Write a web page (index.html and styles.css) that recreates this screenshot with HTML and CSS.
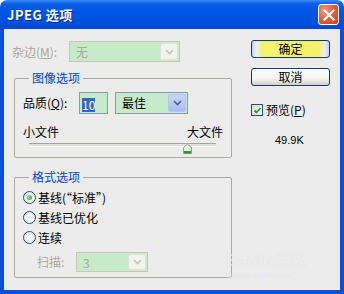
FILE: index.html
```html
<!DOCTYPE html>
<html lang="zh">
<head>
    <meta charset="UTF-8">
    <title>JPEG 选项</title>
<link rel="stylesheet" href="styles.css">
</head>
<body>
    <div class="window">
        <div class="titlebar">
            <span class="title">JPEG 选项</span>
            <span class="close">
                <svg width="12" height="12" viewBox="0 0 12 12"><path d="M1.5 1.5 L10.5 10.5 M10.5 1.5 L1.5 10.5" stroke="#fff" stroke-width="2.2" stroke-linecap="square"/></svg>
            </span>
        </div>

        <div class="client">
            <div class="left">
                <div class="row matte-row">
                    <span class="label matte-label disabled">杂边(<u>M</u>):</span>
                    <div class="select off matte-select">
                        <span class="value">无</span>
                        <span class="drop"><svg width="9" height="6" viewBox="0 0 9 6"><path d="M1 1 L4.5 4.5 L8 1" fill="none" stroke="#c4c3bb" stroke-width="1.6"/></svg></span>
                    </div>
                </div>

                <fieldset class="group image-group">
                    <legend>图像选项</legend>
                    <div class="row">
                        <span class="label quality-label">品质(<u>Q</u>):</span>
                        <div class="textbox"><span class="picked">10</span></div>
                        <div class="select on quality-select">
                            <span class="value">最佳</span>
                            <span class="drop"><svg width="9" height="6" viewBox="0 0 9 6"><path d="M1 1 L4.5 4.5 L8 1" fill="none" stroke="#4d6185" stroke-width="1.6"/></svg></span>
                        </div>
                    </div>
                    <div class="size-labels"><span>小文件</span><span>大文件</span></div>
                    <div class="slider">
                        <div class="track"></div>
                        <div class="thumb">
                            <svg width="9" height="10" viewBox="0 0 9 10"><path d="M0.5 9.5 V3.5 L4.5 0.5 L8.5 3.5 V9.5 Z" fill="#f4f4f0" stroke="#9d9c94"/><rect x="1" y="7" width="7" height="2.5" fill="#21a121"/></svg>
                        </div>
                    </div>
                </fieldset>

                <fieldset class="group format-group">
                    <legend>格式选项</legend>
                    <div class="radio checked"><span class="dot"></span>基线(“标准”)</div>
                    <div class="radio"><span class="dot"></span>基线已优化</div>
                    <div class="radio"><span class="dot"></span>连续</div>
                    <div class="row scan-row">
                        <span class="label scan-label disabled">扫描:</span>
                        <div class="select off scan-select">
                            <span class="value">3</span>
                            <span class="drop"><svg width="9" height="6" viewBox="0 0 9 6"><path d="M1 1 L4.5 4.5 L8 1" fill="none" stroke="#c4c3bb" stroke-width="1.6"/></svg></span>
                        </div>
                    </div>
                </fieldset>
            </div>

            <div class="right">
                <div class="btn default">确定</div>
                <div class="btn">取消</div>
                <div class="check">
                    <span class="box"><svg width="9" height="9" viewBox="0 0 9 9"><path d="M1.5 4.5 L3.5 6.5 L7.5 2" fill="none" stroke="#21a121" stroke-width="1.8"/></svg></span>
                    预览(<u>P</u>)
                </div>
                <div class="filesize">49.9K</div>
            </div>
        </div>

        <div class="watermark">
            <div class="wm-main">Bai<span class="paw">du</span>经验</div>
            <div class="wm-sub">jingyan.baidu.com</div>
        </div>
    </div>
</body>
</html>
```

FILE: styles.css
```css
:root {
    --face: #ececec;
    --frame-blue: #0a4fdc;
    --group-line: #a9a9a2;
    --group-text: #0046d5;
    --disabled-text: #aca899;
    --field-green: #c7ebc9;
    --field-border: #7f9db9;
}

body {
    margin: 0;
    padding: 0;
    background: #ffffff;
    font-family: "Noto Sans CJK SC", "Noto Sans", sans-serif;
    font-size: 12px;
    color: #000;
}

.window {
    position: relative;
    width: 344px;
    height: 294px;
    display: flex;
    flex-direction: column;
    overflow: hidden;
}

.titlebar {
    height: 29px;
    display: flex;
    align-items: center;
    justify-content: space-between;
    padding: 0 5px 0 7px;
    background: linear-gradient(#3b8cf8 0, #0a5de8 4px, #0055e5 40%, #0050dc 80%, #0347cf 100%);
    border-radius: 7px 7px 0 0;
    box-sizing: border-box;
}

.title {
    color: #fff;
    font-family: "Noto Sans CJK SC", sans-serif;
    font-weight: bold;
    font-size: 13px;
    letter-spacing: 0.5px;
    text-shadow: 1px 1px 0 #0a2a8a;
}

.close {
    width: 21px;
    height: 21px;
    box-sizing: border-box;
    border: 1px solid #fff;
    border-radius: 3px;
    background: radial-gradient(circle at 30% 30%, #f59a7c 0, #e3623c 45%, #c8401c 100%);
    display: flex;
    align-items: center;
    justify-content: center;
}

.client {
    flex-grow: 1;
    display: flex;
    background: var(--face);
    border: 4px solid var(--frame-blue);
    border-top: none;
    padding-left: 8px;
}

.left {
    width: 220px;
}

.row {
    display: flex;
    align-items: center;
}

.label {
    line-height: 14px;
}

.disabled {
    color: var(--disabled-text);
}

.matte-row {
    margin-top: 12px;
}

.matte-label {
    width: 57px;
}

/* dropdowns */
.select {
    height: 21px;
    box-sizing: border-box;
    display: flex;
    align-items: stretch;
    background: var(--field-green);
}

.select .value {
    flex-grow: 1;
    padding-left: 6px;
    line-height: 19px;
}

.select .drop {
    width: 16px;
    margin: 1px;
    display: flex;
    align-items: center;
    justify-content: center;
    border-radius: 2px;
}

.select.off {
    border: 1px solid #c9c7ba;
}

.select.off .value {
    color: var(--disabled-text);
}

.select.off .drop {
    background: #f2f2ee;
    border: 1px solid #e2e1da;
}

.select.on {
    border: 1px solid var(--field-border);
}

.select.on .drop {
    background: linear-gradient(#c6d3f7, #b6c8f6 60%, #a7bcf2);
    border: 1px solid #b4c6f0;
}

.matte-select {
    width: 111px;
}

.quality-select {
    width: 73px;
    height: 22px;
}

.scan-select {
    width: 72px;
    height: 20px;
}

/* group boxes */
.group {
    margin: 0 0 0 2px;
    width: 218px;
    box-sizing: border-box;
    border: 1px solid var(--group-line);
    border-radius: 2px;
    padding: 0 8px;
    min-inline-size: 0;
}

.group legend {
    color: var(--group-text);
    padding: 0 3px;
    margin-left: 6px;
    line-height: 14px;
}

.image-group {
    margin-top: 9px;
    padding-top: 7px;
    padding-bottom: 7px;
}

.quality-label {
    width: 56px;
}

.textbox {
    width: 29px;
    height: 22px;
    box-sizing: border-box;
    border: 1px solid var(--field-border);
    background: var(--field-green);
    margin-right: 7px;
    padding: 3px 0 0 2px;
}

.picked {
    background: #316ac5;
    color: #fff;
    line-height: 14px;
    display: inline-block;
}

.size-labels {
    display: flex;
    justify-content: space-between;
    margin-top: 11px;
    line-height: 14px;
}

.slider {
    position: relative;
    height: 10px;
    margin: 1px 7px 0 6px;
}

.track {
    position: absolute;
    left: 0;
    right: 0;
    top: 3px;
    height: 2px;
    border-top: 1px solid #a4a39c;
    border-bottom: 1px solid #fff;
    background: #e1e0da;
    border-radius: 1px;
}

.thumb {
    position: absolute;
    left: 154px;
    top: 0;
    height: 10px;
}

.format-group {
    margin-top: 12px;
    padding-top: 3px;
    padding-bottom: 5px;
}

.radio {
    display: flex;
    align-items: center;
    height: 20px;
}

.radio .dot {
    width: 13px;
    height: 13px;
    box-sizing: border-box;
    border: 1px solid #1c5180;
    border-radius: 50%;
    background: radial-gradient(circle at 60% 60%, #fff 0, #e6e5df 100%);
    margin-right: 2px;
    display: flex;
    align-items: center;
    justify-content: center;
}

.radio.checked .dot::after {
    content: "";
    width: 5px;
    height: 5px;
    border-radius: 50%;
    background: radial-gradient(circle at 35% 35%, #8ee68e, #21a121);
}

.scan-row {
    margin-top: 5px;
}

.scan-label {
    width: 39px;
    padding-left: 14px;
}

/* right column */
.right {
    margin-left: 19px;
    display: flex;
    flex-direction: column;
}

.btn {
    width: 79px;
    height: 18px;
    box-sizing: border-box;
    border: 1px solid #003c74;
    border-radius: 3px;
    background: linear-gradient(#ffffff, #f4f4f0 60%, #d6d0c5);
    text-align: center;
    line-height: 16px;
    margin-top: 10px;
}

.btn.default {
    margin-top: 11px;
    background: linear-gradient(to right, #c4d3f2 0, #e9eefa 4px, #f6f36e 10px, #f4f06a calc(100% - 10px), #e9eefa calc(100% - 4px), #c4d3f2 100%);
}

.check {
    display: flex;
    align-items: center;
    margin-top: 17px;
    line-height: 14px;
}

.check .box {
    width: 12px;
    height: 12px;
    box-sizing: border-box;
    border: 1px solid #1c5180;
    background: linear-gradient(135deg, #dcdcd6, #fff);
    margin-right: 3px;
    display: flex;
    align-items: center;
    justify-content: center;
}

.filesize {
    margin: 16px 0 0 24px;
    font-family: "Liberation Sans", sans-serif;
    font-size: 11px;
    line-height: 14px;
}

/* faint photo watermark */
.watermark {
    position: absolute;
    left: 226px;
    top: 252px;
    color: rgba(255, 255, 255, 0.55);
    text-shadow: 0 0 1px rgba(180, 180, 180, 0.4);
}

.wm-main {
    font-family: "Liberation Sans", "Noto Sans CJK SC", sans-serif;
    font-size: 16px;
    font-weight: bold;
    line-height: 18px;
}

.paw {
    margin: 0 2px;
}

.wm-sub {
    font-family: "Liberation Serif", serif;
    font-size: 9px;
    line-height: 10px;
}
```
